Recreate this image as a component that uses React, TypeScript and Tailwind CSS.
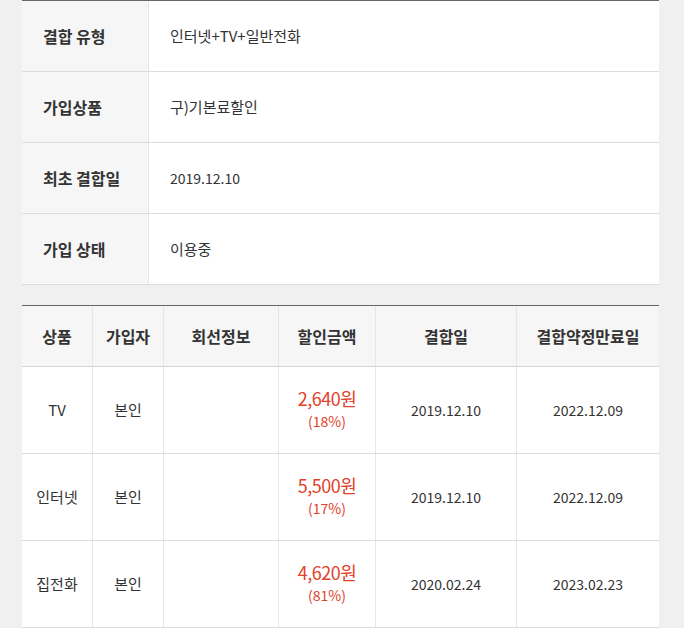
import * as React from "react"

const info = [
  { label: "결합 유형", value: "인터넷+TV+일반전화" },
  { label: "가입상품", value: "구)기본료할인" },
  { label: "최초 결합일", value: "2019.12.10", num: true },
  { label: "가입 상태", value: "이용중" },
]

const rows = [
  { product: "TV", owner: "본인", amount: "2,640원", rate: "(18%)", start: "2019.12.10", end: "2022.12.09" },
  { product: "인터넷", owner: "본인", amount: "5,500원", rate: "(17%)", start: "2019.12.10", end: "2022.12.09" },
  { product: "집전화", owner: "본인", amount: "4,620원", rate: "(81%)", start: "2020.02.24", end: "2023.02.23" },
]

const cols = "grid grid-cols-[71px_71px_115px_97px_141px_142px]"

export default function App() {
  return (
    <div
      className="flex h-[628px] w-[685px] bg-white"
      style={{ fontFamily: '"Noto Sans CJK KR", "Noto Sans", sans-serif' }}
    >
      <div className="flex w-[684px] flex-col bg-[#f0f0f0] pl-[22px] pr-[25px] text-[#333]">
        {/* 결합 정보 */}
        <section className="border-t border-[#666] bg-white">
          {info.map((item) => (
            <div key={item.label} className="grid h-[71px] grid-cols-[127px_1fr] border-b border-[#dcdcdc]">
              <div className="flex items-center border-r border-[#e6e6e6] bg-[#f6f6f6] pl-[21px] text-[16px] font-bold">
                {item.label}
              </div>
              <div className={`flex items-center pl-[21px] ${item.num ? "text-[14px]" : "text-[15px]"}`}>
                {item.value}
              </div>
            </div>
          ))}
        </section>

        {/* 할인 내역 */}
        <section className="mt-[20px] border-t border-[#666] bg-white">
          <div className={`${cols} h-[61px] border-b border-[#d6d6d6] bg-[#f6f6f6] text-[16px] font-bold`}>
            {["상품", "가입자", "회선정보", "할인금액", "결합일", "결합약정만료일"].map((h, i) => (
              <div
                key={h}
                className={`flex items-center justify-center ${i < 5 ? "border-r border-[#e6e6e6]" : ""}`}
              >
                {h}
              </div>
            ))}
          </div>
          {rows.map((r) => (
            <div key={r.product} className={`${cols} h-[87px] border-b border-[#dcdcdc] text-[15px]`}>
              <div className="flex items-center justify-center border-r border-[#e6e6e6]">{r.product}</div>
              <div className="flex items-center justify-center border-r border-[#e6e6e6]">{r.owner}</div>
              <div className="border-r border-[#e6e6e6]" />
              <div className="flex flex-col items-center justify-center border-r border-[#e6e6e6] pb-[2px] text-[#e2412a]">
                <span className="text-[18px] leading-[24px] tracking-[-0.5px]">{r.amount}</span>
                <span className="text-[14px] leading-[22px]">{r.rate}</span>
              </div>
              <div className="flex items-center justify-center border-r border-[#e6e6e6] text-[14px]">{r.start}</div>
              <div className="flex items-center justify-center text-[14px]">{r.end}</div>
            </div>
          ))}
        </section>
      </div>
    </div>
  )
}
